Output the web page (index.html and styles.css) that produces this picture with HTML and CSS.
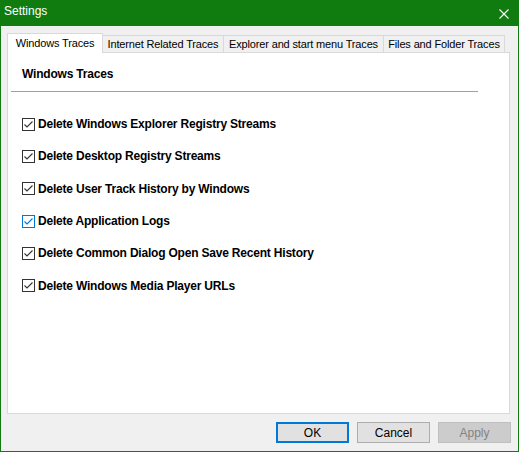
FILE: index.html
```html
<!DOCTYPE html>
<html>
<head>
<meta charset="utf-8">
<title>Settings</title>
<link rel="stylesheet" href="styles.css">
</head>
<body>
<div class="window">
  <div class="titlebar">
    <span class="title">Settings</span>
    <svg class="close" width="10" height="10" viewBox="0 0 10 10"><path d="M0.5 0.5 L9.5 9.5 M9.5 0.5 L0.5 9.5" stroke="#ffffff" stroke-width="1.1" fill="none"/></svg>
  </div>
  <div class="client">
    <div class="tabs">
      <div class="tab active">Windows Traces</div>
      <div class="tab t-internet">Internet Related Traces</div>
      <div class="tab t-explorer">Explorer and start menu Traces</div>
      <div class="tab t-files">Files and Folder Traces</div>
    </div>
    <div class="panel">
      <div class="panel-head">Windows Traces</div>
      <div class="sep"></div>
      <div class="list">
        <label class="row"><svg class="cb" width="13" height="13" viewBox="0 0 13 13"><rect x="0.5" y="0.5" width="12" height="12" fill="#fff" stroke="#333"/><path d="M2.5 6.5 L5 9 L10.5 3.5" stroke="#333" stroke-width="1.1" fill="none"/></svg><span>Delete Windows Explorer Registry Streams</span></label>
        <label class="row"><svg class="cb" width="13" height="13" viewBox="0 0 13 13"><rect x="0.5" y="0.5" width="12" height="12" fill="#fff" stroke="#333"/><path d="M2.5 6.5 L5 9 L10.5 3.5" stroke="#333" stroke-width="1.1" fill="none"/></svg><span>Delete Desktop Registry Streams</span></label>
        <label class="row"><svg class="cb" width="13" height="13" viewBox="0 0 13 13"><rect x="0.5" y="0.5" width="12" height="12" fill="#fff" stroke="#333"/><path d="M2.5 6.5 L5 9 L10.5 3.5" stroke="#333" stroke-width="1.1" fill="none"/></svg><span>Delete User Track History by Windows</span></label>
        <label class="row"><svg class="cb" width="13" height="13" viewBox="0 0 13 13"><rect x="0.5" y="0.5" width="12" height="12" fill="#fff" stroke="#0078d7"/><path d="M2.5 6.5 L5 9 L10.5 3.5" stroke="#0078d7" stroke-width="1.1" fill="none"/></svg><span>Delete Application Logs</span></label>
        <label class="row"><svg class="cb" width="13" height="13" viewBox="0 0 13 13"><rect x="0.5" y="0.5" width="12" height="12" fill="#fff" stroke="#333"/><path d="M2.5 6.5 L5 9 L10.5 3.5" stroke="#333" stroke-width="1.1" fill="none"/></svg><span>Delete Common Dialog Open Save Recent History</span></label>
        <label class="row"><svg class="cb" width="13" height="13" viewBox="0 0 13 13"><rect x="0.5" y="0.5" width="12" height="12" fill="#fff" stroke="#333"/><path d="M2.5 6.5 L5 9 L10.5 3.5" stroke="#333" stroke-width="1.1" fill="none"/></svg><span>Delete Windows Media Player URLs</span></label>
      </div>
    </div>
    <div class="buttons">
      <button class="btn default">OK</button>
      <button class="btn">Cancel</button>
      <button class="btn disabled">Apply</button>
    </div>
  </div>
</div>
</body>
</html>
```

FILE: styles.css
```css
* { box-sizing: border-box; }
html, body { margin: 0; padding: 0; background: #f0f0f0; }
body { font-family: "Liberation Sans", Arial, sans-serif; font-size: 12px; color: #000; }

.window { width: 519px; height: 452px; display: flex; flex-direction: column; }

.titlebar {
  height: 26px; background: #107c10; color: #fff;
  display: flex; justify-content: space-between; align-items: flex-start;
}
.title { font-size: 12px; line-height: 22px; padding-left: 4px; }
.close { margin-top: 9px; margin-right: 10px; }

.client {
  flex: 1; background: #f0f0f0;
  border: 1px solid #107c10; border-top: none;
  display: flex; flex-direction: column;
}

.tabs {
  height: 19px; margin-top: 7px; margin-left: 6px;
  display: flex; align-items: flex-end;
}
.tab {
  height: 17px; border: 1px solid #d9d9d9; border-bottom: none;
  background: #f0f0f0; font-size: 11px; letter-spacing: -0.15px;
  line-height: 15px; padding-top: 1px; text-align: center; white-space: nowrap;
  margin-left: -1px;
}
.tab.active {
  height: 20px; width: 96px; margin-left: 0; margin-bottom: -1px;
  background: #fff; line-height: 18px; padding-top: 0;
  position: relative; z-index: 1;
}
.t-internet { width: 122px; }
.t-explorer { width: 161px; }
.t-files { width: 122px; }

.panel {
  width: 503px; height: 362px; margin-left: 6px;
  background: #fff; border: 1px solid #d9d9d9;
}
.panel-head {
  margin-top: 13px; padding-left: 14px;
  font-weight: bold; font-size: 12px; line-height: 16px; letter-spacing: -0.2px;
}
.sep { margin: 9px 0 0 3px; width: 467px; height: 1px; background: #a0a0a0; }

.list { margin-top: 16px; padding-left: 14px; display: flex; flex-direction: column; }
.row {
  height: 32.3px; display: flex; align-items: center; gap: 3px;
  font-weight: bold; font-size: 12px; letter-spacing: -0.2px;
}
.cb { flex: none; }

.buttons {
  margin-top: 8px; padding-right: 7px;
  display: flex; justify-content: flex-end; gap: 8px;
}
.btn {
  width: 73px; height: 21px; padding: 0;
  background: #e1e1e1; border: 1px solid #adadad;
  font-family: "Liberation Sans", Arial, sans-serif; font-size: 12px; color: #000;
}
.btn.default { border: 2px solid #0078d7; }
.btn.disabled { background: #cccccc; border-color: #bfbfbf; color: #838383; }
```
